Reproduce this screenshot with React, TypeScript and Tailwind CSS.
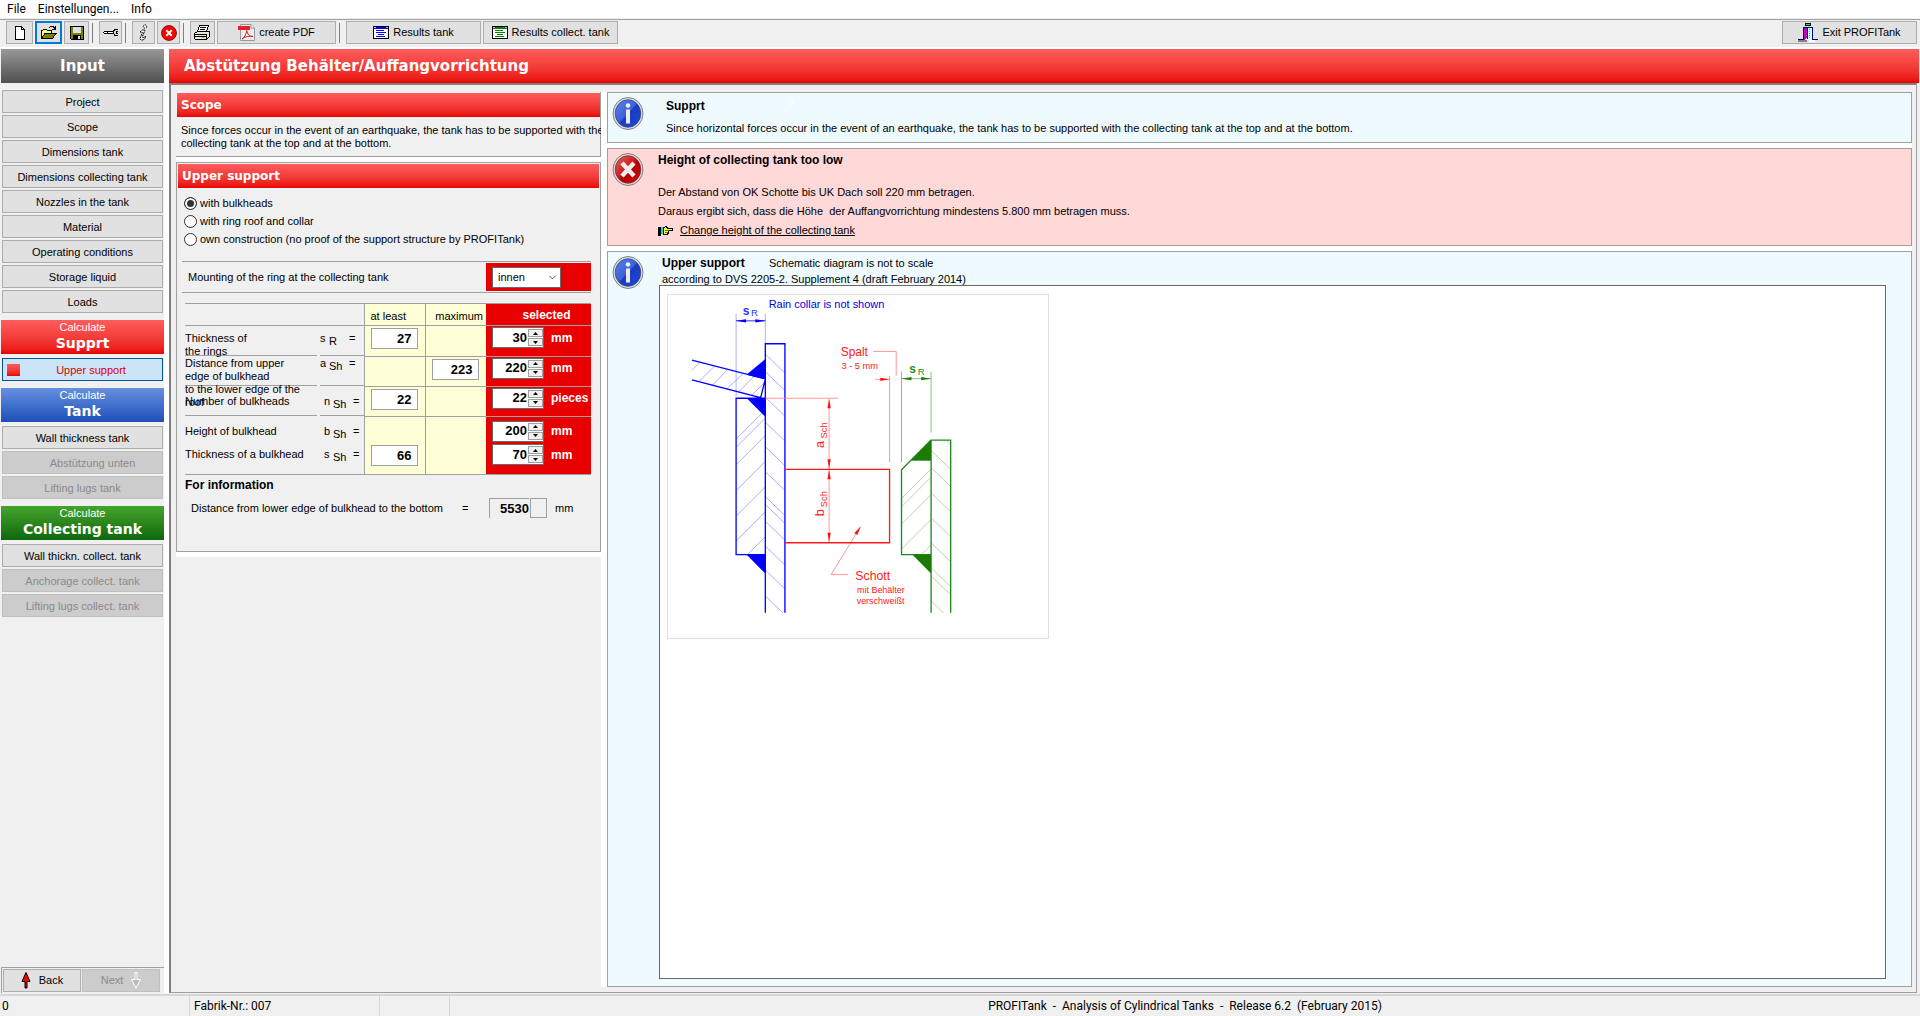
import { useState } from "react";
import type { ReactNode } from "react";
import { ChevronDown } from "lucide-react";

const inputPages = [
  "Project",
  "Scope",
  "Dimensions tank",
  "Dimensions collecting tank",
  "Nozzles in the tank",
  "Material",
  "Operating conditions",
  "Storage liquid",
  "Loads",
];

const supportTypes = [
  "with bulkheads",
  "with ring roof and collar",
  "own construction (no proof of the support structure by PROFITank)",
];

function NewIcon() {
  return (
    <svg width="12" height="14" viewBox="0 0 12 14" shapeRendering="crispEdges">
      <path d="M1.500 0.500H7.500L10.500 3.500V13.500H1.500Z" fill="#fff" stroke="#000" />
      <path d="M7.500 1V3.500H10.500" fill="none" stroke="#000" />
    </svg>
  );
}

function OpenIcon() {
  return (
    <svg width="17" height="15" viewBox="0 0 17 15" shapeRendering="crispEdges">
      <path d="M1.500 13V5.500H2.500L3.500 4.500H6.500L7.500 5.500H11.500V8" fill="#ffff80" stroke="#000" />
      <path d="M1.500 13.500L5 8.500H16L12.500 13.500Z" fill="#808000" stroke="#000" />
      <path d="M9.500 2.500L11 1.500H13L15.500 4M15.500 1V4.500H12" fill="none" stroke="#000" />
    </svg>
  );
}

function SaveIcon() {
  return (
    <svg width="14" height="14" viewBox="0 0 14 14" shapeRendering="crispEdges">
      <path d="M0.500 0.500H13.500V13.500H1.500L0.500 12.500Z" fill="#808000" stroke="#000" />
      <path d="M3 1H11V7H3Z" fill="#e0e0e0" />
      <path d="M3 9H11V13H3Z" fill="#000" />
      <path d="M8 10H10V13H8Z" fill="#e0e0e0" />
    </svg>
  );
}

function WrenchIcon() {
  return (
    <svg width="16" height="7" viewBox="0 0 16 7" shapeRendering="crispEdges">
      <path d="M1 2H10V5H1L0 4V3Z" fill="#000" />
      <path d="M1 3H4V4H1ZM5 3H11V4H5Z" fill="#fff" />
      <path d="M15 0.500H12L10.500 2V4.500L12 6.500H15M15 2.500H13.500V4.500H15" fill="none" stroke="#000" />
      <path d="M11 2H13V5H11Z" fill="#a0e8f0" />
    </svg>
  );
}

function ItalicInfoIcon() {
  return (
    <svg width="9" height="17" viewBox="0 0 9 17">
      <circle cx="6" cy="2.500" r="1.700" fill="#fff" stroke="#000" strokeDasharray="1.500 0.800" />
      <path
        d="M1 8L3.500 6H6L3.500 12.500L4 14L6.500 12.500V14L4 16H2L1 14.500L3.500 8.500Z"
        fill="#fff"
        stroke="#000"
        strokeDasharray="2 0.600"
      />
    </svg>
  );
}

function CancelIcon() {
  return (
    <svg width="16" height="16" viewBox="0 0 16 16">
      <circle cx="8" cy="8" r="7.500" fill="#f00" stroke="#400" strokeWidth="0.700" />
      <path d="M5.300 5.300L10.700 10.700M10.700 5.300L5.300 10.700" stroke="#fff" strokeWidth="2" />
    </svg>
  );
}

function PrintIcon() {
  return (
    <svg width="17" height="16" viewBox="0 0 17 16" shapeRendering="crispEdges">
      <path d="M5.500 0.500H14.500L12.500 6.500H3.500Z" fill="#fff" stroke="#000" />
      <path d="M6 2.500H12M5.500 4.500H11" stroke="#000" />
      <path d="M0.500 8.500L3.500 6.500H15.500V11.500L12.500 14.500H1.500L0.500 13.500Z" fill="#e8e8e8" stroke="#000" />
      <path d="M1 9.500H12.500V14M1 11.500H12" fill="none" stroke="#000" />
      <path d="M8 12H11V13H8Z" fill="#c8c800" />
    </svg>
  );
}

function PdfIcon() {
  return (
    <svg width="17" height="17" viewBox="0 0 17 17">
      <path d="M2.500 0.500H13L16.500 4V16.500H2.500Z" fill="#ececec" stroke="#9a9a9a" />
      <path d="M13 0.500V4H16.500" fill="#fff" stroke="#888" />
      <path d="M0 2H12V6H0Z" fill="#e4202c" />
      <path d="M4 15C6 14 8.500 10 8.800 6.500C9.500 10.500 12 13 15 12.500C12 11.500 7 12.500 4 15Z" fill="none" stroke="#d8202c" />
    </svg>
  );
}

function ResultIcon({ color }: { color: string }) {
  return (
    <svg width="16" height="13" viewBox="0 0 16 13" shapeRendering="crispEdges">
      <path d="M0.500 0.500H15.500V12.500H0.500Z" fill="#fff" stroke="#000" />
      <path d="M1 1H15V3H1Z" fill={color} />
      <path d="M1 1H3V2H1ZM13 1H15V2H13Z" fill="#c0c0c0" />
      <path d="M3 4.500H11M3 6.500H13M5 8.500H11M3 10.500H12" stroke={color} />
    </svg>
  );
}

function ExitIcon() {
  return (
    <svg width="20" height="20" viewBox="0 0 20 20" shapeRendering="crispEdges">
      <path d="M7 0H13V3H7Z" fill="#000" />
      <path d="M8 1H12V2H8Z" fill="#0f0" />
      <path d="M6 5H9V15L6 17Z" fill="#c000c0" />
      <path d="M10 5H14V17H10Z" fill="#c8ffff" />
      <path d="M11.500 6V16" stroke="#00c8e8" strokeDasharray="1 1" />
      <path d="M9.500 5V16" stroke="#000" />
      <path d="M0 17H9V19H0Z" fill="#808080" />
      <path d="M11 17H17V19H11Z" fill="#fff" />
      <path d="M0 16.500H5.500V4.500H14.500V16.500H20" fill="none" stroke="#000080" />
    </svg>
  );
}

function HandIcon() {
  return (
    <svg width="16" height="10" viewBox="0 0 16 10" shapeRendering="crispEdges">
      <path d="M0 1H3V10H0Z" fill="#000" />
      <path d="M3 1H5V8H3Z" fill="#00e0e0" />
      <path d="M5.500 1.500L8.500 0.500L9.500 2.500H14.500V4.500H10.500V7.500L8.500 8.500H5.500Z" fill="#ffff40" stroke="#000" />
      <path d="M7 4.500H11M7 6.500H10" stroke="#806000" />
    </svg>
  );
}

function InfoBadge() {
  return (
    <svg width="32" height="33" viewBox="0 0 31 33" className="shrink-0">
      <defs>
        <linearGradient id="infoBlue" x1="0" y1="0" x2="1" y2="1">
          <stop offset="0" stopColor="#5b82ea" />
          <stop offset="0.480" stopColor="#3a62d8" />
          <stop offset="0.520" stopColor="#1a3cc0" />
          <stop offset="1" stopColor="#1f48d8" />
        </linearGradient>
      </defs>
      <ellipse cx="15.500" cy="16.500" rx="15" ry="16" fill="#d9dde2" stroke="#7c8288" />
      <ellipse cx="15.500" cy="16.500" rx="12.800" ry="13.800" fill="url(#infoBlue)" stroke="#2a3d78" strokeWidth="0.700" />
      <circle cx="15.500" cy="8.500" r="2.300" fill="#f0f0f0" />
      <path d="M13.500 12.500H17.500V26.500H13.500Z" fill="#ececec" />
    </svg>
  );
}

function ErrorBadge() {
  return (
    <svg width="32" height="33" viewBox="0 0 31 33" className="shrink-0">
      <defs>
        <linearGradient id="errorRed" x1="0" y1="0" x2="1" y2="1">
          <stop offset="0" stopColor="#e06060" />
          <stop offset="0.450" stopColor="#cc2020" />
          <stop offset="0.550" stopColor="#b00000" />
          <stop offset="1" stopColor="#d80808" />
        </linearGradient>
      </defs>
      <ellipse cx="15.500" cy="16.500" rx="15" ry="16" fill="#dcd8d8" stroke="#857c7c" />
      <ellipse cx="15.500" cy="16.500" rx="12.800" ry="13.800" fill="url(#errorRed)" stroke="#802020" strokeWidth="0.700" />
      <path d="M9.500 10L21.500 23M21.500 10L9.500 23" stroke="#ececec" strokeWidth="4.500" />
    </svg>
  );
}

function ArrowIcon({ up }: { up?: boolean }) {
  return (
    <svg width="10" height="17" viewBox="0 0 10 17">
      {up ? (
        <path d="M5 0.500L9 9.500H6V16H4V9.500H1Z" fill="#f00" stroke="#000" />
      ) : (
        <path d="M4 0.500H6V7.500H9.500L5 16L0.500 7.500H4Z" fill="#bbb" stroke="#fff" />
      )}
    </svg>
  );
}

// group of toolbar buttons that starts with a divider line
function ToolGroup({ children }: { children: ReactNode }) {
  return (
    <div className="flex items-center gap-[6px] pl-px">
      <span className="h-5 w-px bg-[#808080]" />
      {children}
    </div>
  );
}

function ToolButton({ label, active, width, children }: { label: string; active?: boolean; width: string; children: ReactNode }) {
  return (
    <button
      aria-label={label}
      className={`flex h-[23px] items-center justify-center bg-[#e1e1e1] ${width} ${
        active ? "border-2 border-[#0078d7]" : "border border-[#adadad]"
      }`}
    >
      {children}
    </button>
  );
}

function TextButton({ label, width, children }: { label: string; width: string; children: ReactNode }) {
  return (
    <button className={`flex h-[23px] items-center justify-center gap-1 border border-[#adadad] bg-[#e1e1e1] whitespace-nowrap ${width}`}>
      {children}
      {label}
    </button>
  );
}

function NavButton({ label, disabled, indent }: { label: string; disabled?: boolean; indent?: boolean }) {
  return (
    <button
      disabled={disabled}
      className={`h-[23px] w-full border border-[#adadad] bg-[#e1e1e1] pt-px text-center disabled:border-[#bfbfbf] disabled:bg-[#cccccc] disabled:text-[#8a8a8a] ${
        indent ? "pl-5" : ""
      }`}
    >
      {label}
    </button>
  );
}

function NavHeader({ title, color }: { title: string; color: string }) {
  return (
    <div className={`flex h-[34px] flex-col items-center bg-linear-to-b text-white ${color}`}>
      <span className="leading-[15px]">Calculate</span>
      <h2 className="font-['DejaVu_Sans',sans-serif] text-sm leading-4 font-bold">{title}</h2>
    </div>
  );
}

function Sidebar() {
  return (
    <nav className="flex w-[163px] shrink-0 flex-col">
      <h2 className="flex h-[34px] items-center justify-center bg-linear-to-b from-[#999999] to-[#505050] pt-px font-['DejaVu_Sans',sans-serif] text-[15px] font-bold text-white">
        Input
      </h2>
      <div className="flex flex-col gap-[2px] px-px py-[7px]">
        {inputPages.map((page) => (
          <NavButton key={page} label={page} />
        ))}
      </div>
      <NavHeader title="Supprt" color="from-[#ff5c5c] to-[#e80000]" />
      <div className="px-px pt-1 pb-[7px]">
        <button className="flex h-[23px] w-full items-center border border-[#005499] bg-[#cce4f7] px-1 pt-px text-[#d80000]">
          <span className="h-3 w-[13px] bg-linear-to-b from-[#ff5c5c] to-[#e80000]" />
          <span className="flex-1 pl-1">Upper support</span>
        </button>
      </div>
      <NavHeader title="Tank" color="from-[#6690e0] to-[#1c50b8]" />
      <div className="flex flex-col gap-[2px] px-px pt-1 pb-[7px]">
        <NavButton label="Wall thickness tank" />
        <NavButton label="Abstützung unten" disabled indent />
        <NavButton label="Lifting lugs tank" disabled />
      </div>
      <NavHeader title="Collecting tank" color="from-[#44a42c] to-[#0c680c]" />
      <div className="flex flex-col gap-[2px] px-px pt-1">
        <NavButton label="Wall thickn. collect. tank" />
        <NavButton label="Anchorage collect. tank" disabled />
        <NavButton label="Lifting lugs collect. tank" disabled />
      </div>
      <div className="mt-auto flex gap-px border-t border-l border-[#a0a0a0] p-px">
        <button className="flex h-[23px] w-[78px] items-center justify-center gap-2 border border-[#adadad] bg-[#e1e1e1]">
          <ArrowIcon up />
          Back
        </button>
        <button disabled className="flex h-[23px] w-[78px] items-center justify-center gap-2 border border-[#bfbfbf] bg-[#cccccc] text-[#8a8a8a]">
          Next
          <ArrowIcon />
        </button>
      </div>
    </nav>
  );
}

function Bar({ children }: { children: ReactNode }) {
  return (
    <h2 className="flex h-6 items-center bg-linear-to-b from-[#ff5c5c] to-[#e80000] px-1 font-['DejaVu_Sans',sans-serif] text-xs font-bold text-white">
      {children}
    </h2>
  );
}

function Limit({ value, label }: { value?: string; label: string }) {
  if (!value) return null;
  return (
    <input
      aria-label={label}
      readOnly
      value={value}
      className="ml-[6px] block h-[21px] w-[47px] border border-[#a0a0a0] bg-white pr-[5px] text-right text-[13px] font-bold"
    />
  );
}

function Spin({ initial, label }: { initial: number; label: string }) {
  const [value, setValue] = useState(initial);
  return (
    <div className="flex h-[21px] w-[52px] shrink-0 border border-[#696969] bg-white">
      <input
        aria-label={label}
        value={value}
        onChange={(e) => setValue(Number(e.target.value) || 0)}
        className="w-[34px] text-right text-[13px] font-bold text-black outline-none"
      />
      <div className="flex w-4 flex-col gap-px py-px pl-px">
        <button aria-label={`${label} up`} onClick={() => setValue(value + 1)} className="flex h-2 items-center justify-center border border-[#a0a0a0] bg-[#f0f0f0]">
          <svg width="5" height="3" viewBox="0 0 5 3">
            <path d="M0 3L2.500 0L5 3Z" />
          </svg>
        </button>
        <button aria-label={`${label} down`} onClick={() => setValue(value - 1)} className="flex h-2 items-center justify-center border border-[#a0a0a0] bg-[#f0f0f0]">
          <svg width="5" height="3" viewBox="0 0 5 3">
            <path d="M0 0L2.500 3L5 0Z" />
          </svg>
        </button>
      </div>
    </div>
  );
}

type Row = {
  lines: string[];
  symbol: string;
  index: string;
  min?: string;
  max?: string;
  value: number;
  unit: string;
  label: string;
  field: string;
  border: string;
  shift?: boolean;
};

const rows: Row[] = [
  {
    lines: ["Thickness of", "the rings"],
    symbol: "s",
    index: "R",
    min: "27",
    value: 30,
    unit: "mm",
    label: "h-[30px] pt-[6px]",
    field: "pt-px",
    border: "border-b",
  },
  {
    lines: ["Distance from upper", "edge of bulkhead", "to the lower edge of the", "roof"],
    symbol: "a",
    index: "Sh",
    max: "223",
    value: 220,
    unit: "mm",
    label: "h-[30px] pt-px",
    field: "pt-px",
    border: "border-b",
  },
  {
    lines: ["Number of bulkheads"],
    symbol: "n",
    index: "Sh",
    min: "22",
    value: 22,
    unit: "pieces",
    label: "h-[30px] pt-[9px]",
    field: "pt-px",
    border: "border-b",
    shift: true,
  },
  {
    lines: ["Height of bulkhead"],
    symbol: "b",
    index: "Sh",
    value: 200,
    unit: "mm",
    label: "h-[27px] pt-[9px]",
    field: "pt-1",
    border: "",
    shift: true,
  },
  {
    lines: ["Thickness of a bulkhead"],
    symbol: "s",
    index: "Sh",
    min: "66",
    value: 70,
    unit: "mm",
    label: "h-[31px] pt-[5px]",
    field: "pt-px",
    border: "",
    shift: true,
  },
];

function DimensionTable() {
  return (
    <table className="mt-[10px] ml-[7px] w-[406px] table-fixed border-y border-[#a0a0a0] text-left">
      <colgroup>
        <col className="w-[135px]" />
        <col className="w-11" />
        <col className="w-[61px]" />
        <col className="w-[61px]" />
        <col className="w-[105px]" />
      </colgroup>
      <thead>
        <tr className="h-[22px] border-b border-[#a0a0a0]">
          <td colSpan={2} />
          <th className="border-l border-[#a0a0a0] bg-[#ffffd7] pt-1 pl-[6px] font-normal">at least</th>
          <th className="border-l border-[#a0a0a0] bg-[#ffffd7] pt-1 pr-[3px] text-right font-normal">maximum</th>
          <th className="bg-[#e80000] p-0 pl-4 text-center text-xs font-bold text-white">selected</th>
        </tr>
      </thead>
      <tbody>
        {rows.map((row) => (
          <tr key={row.lines[0]} className="align-top">
            <th className="p-0 font-normal">
              <div className={`mr-[3px] border-[#a0a0a0] whitespace-nowrap ${row.label} ${row.border}`}>
                {row.lines.map((line) => (
                  <div key={line} className="leading-[13px]">
                    {line}
                  </div>
                ))}
              </div>
            </th>
            <td className="p-0">
              <div className={`flex border-[#a0a0a0] leading-[13px] ${row.label} ${row.border} ${row.shift ? "pl-1" : ""}`}>
                <span className="w-[9px]">{row.symbol}</span>
                <sub className="top-[3px] w-5 text-[11px] leading-[13px]">{row.index}</sub>
                <span>=</span>
              </div>
            </td>
            <td className={`border-l border-[#a0a0a0] bg-[#ffffd7] p-0 pt-[2px] ${row.border}`}>
              <Limit value={row.min} label={`${row.lines[0]} at least`} />
            </td>
            <td className={`border-l border-[#a0a0a0] bg-[#ffffd7] p-0 pt-[2px] ${row.border}`}>
              <Limit value={row.max} label={`${row.lines[0]} maximum`} />
            </td>
            <td className={`border-[#a0a0a0] bg-[#e80000] p-0 ${row.field} ${row.border}`}>
              <div className="flex items-center gap-[7px] pl-[6px] text-xs leading-4 font-bold text-white">
                <Spin initial={row.value} label={row.lines[0]} />
                {row.unit}
              </div>
            </td>
          </tr>
        ))}
      </tbody>
    </table>
  );
}

function SupportForm() {
  const [supportType, setSupportType] = useState(supportTypes[0]);

  return (
    <div className="flex w-[425px] shrink-0 flex-col gap-[5px] self-start bg-white pb-[5px]">
      <section className="h-[65px] border-r border-b border-[#a0a0a0] bg-[#f0f0f0] pt-px pl-px">
        <Bar>Scope</Bar>
        <p className="pt-[7px] pl-1 leading-[13px] whitespace-nowrap">
          Since forces occur in the event of an earthquake, the tank has to be supported with the
          <br />
          collecting tank at the top and at the bottom.
        </p>
      </section>
      <section className="h-[390px] border border-[#a0a0a0] bg-[#f0f0f0] p-px">
        <Bar>Upper support</Bar>
        <div className="flex flex-col pt-[6px] pl-[6px]">
          {supportTypes.map((type) => (
            <label key={type} className="flex h-[18px] items-center gap-[3px]">
              <input
                type="radio"
                name="supportType"
                checked={supportType === type}
                onChange={() => setSupportType(type)}
                className="h-[13px] w-[13px] appearance-none rounded-full border border-[#333333] bg-white checked:bg-[#333333] checked:shadow-[inset_0_0_0_2px_white]"
              />
              {type}
            </label>
          ))}
        </div>
        <div className="mt-[13px] ml-1 flex h-8 w-[409px] items-center justify-between border-y border-[#a0a0a0] pl-[6px]">
          <label htmlFor="mounting">Mounting of the ring at the collecting tank</label>
          <div className="flex h-7 w-[105px] items-center bg-[#e80000] pl-[6px]">
            <div className="relative">
              <select id="mounting" className="block h-[21px] w-[69px] appearance-none border border-[#696969] bg-white pl-[5px]">
                <option>innen</option>
                <option>außen</option>
              </select>
              <ChevronDown size={11} className="pointer-events-none absolute top-[5px] right-[3px] text-[#444444]" />
            </div>
          </div>
        </div>
        <DimensionTable />
        <h3 className="pt-[3px] pl-[7px] text-xs leading-[14px] font-bold">For information</h3>
        <div className="flex items-center pt-[6px] pl-[13px]">
          <label htmlFor="bottomDistance" className="w-[271px]">
            Distance from lower edge of bulkhead to the bottom
          </label>
          <span className="w-[27px]">=</span>
          <input
            id="bottomDistance"
            readOnly
            value="5530"
            className="h-5 w-10 border-t border-l border-[#a0a0a0] text-right text-[13px] font-bold"
          />
          <span className="ml-px h-5 w-[17px] border border-[#a0a0a0]" />
          <span className="pl-2">mm</span>
        </div>
      </section>
    </div>
  );
}

// y of every hatch line on the edge it starts from
const wallHatch = [122, 222, 275, 352, 427, 501, 576, 651, 675, 725, 800, 872, 950];
const plateHatch = [390, 415, 467, 545, 622, 697, 772, 847];
const outerWallHatch = [437, 512, 564, 640, 715, 790, 865, 890, 965];
const outerPlateHatch = [568, 593, 645, 720, 797, 872];

function SupportDiagram() {
  return (
    <svg viewBox="0 0 1144 1031" className="mt-2 ml-[7px] block h-[345px] w-[382px] border border-[#e0e0e0]">
      <defs>
        <clipPath id="tankWall">
          <path d="M345 191H404V1001H345Z" />
        </clipPath>
        <clipPath id="tankRing">
          <path d="M257 355H289L345 411V826H257Z" />
        </clipPath>
        <clipPath id="roofSheet">
          <path d="M124 240L343 297L331 353L124 300Z" />
        </clipPath>
        <clipPath id="outerWall">
          <path d="M844 481H903V1001H844Z" />
        </clipPath>
        <clipPath id="outerRing">
          <path d="M755 570L785 541H844V826H755Z" />
        </clipPath>
      </defs>
      <g transform="translate(-52 -45)">
        <g stroke="#9c9cff" strokeWidth="2.500">
          <g clipPath="url(#tankWall)">
            {wallHatch.map((y) => (
              <path key={y} d={`M345 ${y}l59 57`} />
            ))}
          </g>
          <g clipPath="url(#tankRing)">
            {plateHatch.map((y) => (
              <path key={y} d={`M345 ${y}l-88 88`} />
            ))}
          </g>
          <g clipPath="url(#roofSheet)">
            <path d="M120 275L160 235M145 305L205 245M182 320L235 265M220 335L290 270M255 345L320 280M300 350L345 305" />
          </g>
          <path d="M257 100V350M345 100V191" />
        </g>
        <g stroke="#0000ff" strokeWidth="4" fill="none">
          <path d="M345 1001V191H404V1001M345 355H257V826H345M124 240L345 297L331 353L124 300" />
          <path d="M257 122H345" strokeWidth="2.500" />
        </g>
        <path d="M345 237V298L288 284ZM289 355H345V411ZM289 826H345V883ZM257 122l30 -5v10ZM345 122l-30 -5v10Z" fill="#0000ff" />

        <g stroke="#ff8080" strokeWidth="2.500" fill="none">
          <path d="M345 355H565M537 355V790M719 288V548M670 214H739V287M676 298H719M631 742L543 886H594" />
        </g>
        <path d="M404 569H719V790H404" fill="none" stroke="#ff1818" strokeWidth="4" />
        <path d="M537 357l-5 28h10ZM537 567l-5 -28h10ZM537 571l-5 28h10ZM537 788l-5 -28h10ZM719 298l-28 -5v10ZM632 741l-19 20l9 6Z" fill="#ff1010" />

        <g stroke="#b4c890" strokeWidth="2.500">
          <g clipPath="url(#outerWall)">
            {outerWallHatch.map((y) => (
              <path key={y} d={`M844 ${y}l59 57`} />
            ))}
          </g>
          <g clipPath="url(#outerRing)">
            {outerPlateHatch.map((y) => (
              <path key={y} d={`M844 ${y}l-88 88`} />
            ))}
          </g>
        </g>
        <path d="M755 275V548M844 275V458M755 296H844" stroke="#70b070" strokeWidth="2.500" />
        <path d="M844 1001V481H903V1001M844 826H755V570L844 481M785 541H844" fill="none" stroke="#208820" strokeWidth="4" />
        <path d="M844 481V541H785ZM788 826H844V883ZM755 296l30 -5v10ZM844 296l-30 -5v10Z" fill="#1c7c00" />

        <text x="355" y="83" fontSize="33" fill="#0000e0">
          Rain collar is not shown
        </text>
        <g fill="#3030ff">
          <text x="277" y="103" fontSize="36" fontWeight="bold">s</text>
          <text x="302" y="108" fontSize="29">R</text>
        </g>
        <g fill="#209020">
          <text x="778" y="279" fontSize="36" fontWeight="bold">s</text>
          <text x="804" y="284" fontSize="29">R</text>
        </g>
        <g fill="#ff1818">
          <text x="572" y="228" fontSize="36">Spalt</text>
          <text x="574" y="267" fontSize="28">3 - 5 mm</text>
          <text x="616" y="902" fontSize="37">Schott</text>
          <text x="621" y="940" fontSize="27">mit Behälter</text>
          <text x="620" y="973" fontSize="27">verschweißt</text>
          <text transform="translate(522 505) rotate(-90)" fontSize="38">a</text>
          <text transform="translate(530 476) rotate(-90)" fontSize="28">Sch</text>
          <text transform="translate(522 710) rotate(-90)" fontSize="38">b</text>
          <text transform="translate(530 683) rotate(-90)" fontSize="28">Sch</text>
        </g>
      </g>
    </svg>
  );
}

function Notices() {
  return (
    <div className="flex flex-1 flex-col gap-[5px] bg-white pl-[6px]">
      <section className="flex h-[51px] border border-[#a0a0a0] bg-[#effaff] pt-1 pl-1">
        <InfoBadge />
        <div className="pl-[22px]">
          <div className="flex gap-[84px] pt-[2px] leading-[14px]">
            <h3 className="text-xs leading-[14px] font-bold">Supprt</h3>
            <span className="text-[9px] leading-2 text-white">3</span>
          </div>
          <p className="pt-2 leading-[14px]">
            Since horizontal forces occur in the event of an earthquake, the tank has to be supported with the collecting tank at the top and at the bottom.
          </p>
        </div>
      </section>
      <section className="flex h-[98px] border border-[#a0a0a0] bg-[#ffd8d8] pt-1 pl-1">
        <ErrorBadge />
        <div className="pl-[14px]">
          <h3 className="text-xs leading-[14px] font-bold">Height of collecting tank too low</h3>
          <p className="pt-4 leading-[19px]">Der Abstand von OK Schotte bis UK Dach soll 220 mm betragen.</p>
          <p className="leading-[19px] whitespace-pre">Daraus ergibt sich, dass die Höhe  der Auffangvorrichtung mindestens 5.800 mm betragen muss.</p>
          <div className="flex items-center gap-[6px] leading-[19px]">
            <HandIcon />
            <a href="#height" className="underline">
              Change height of the collecting tank
            </a>
          </div>
        </div>
      </section>
      <section className="flex flex-1 border border-[#a0a0a0] bg-[#effaff] pt-1 pb-[7px] pl-1">
        <InfoBadge />
        <div className="flex flex-1 flex-col pr-[25px] pl-[15px]">
          <div className="flex gap-6 pl-[3px] leading-[15px]">
            <h3 className="w-[83px] text-xs leading-[15px] font-bold whitespace-nowrap">Upper support</h3>
            <span>Schematic diagram is not to scale</span>
          </div>
          <p className="h-[14px] pl-[3px] leading-4">according to DVS 2205-2. Supplement 4 (draft February 2014)</p>
          <div className="flex-1 border border-[#696969] bg-white">
            <SupportDiagram />
          </div>
        </div>
      </section>
    </div>
  );
}

export default function App() {
  return (
    <div className="flex min-h-screen flex-col bg-[#f0f0f0] font-['Liberation_Sans',sans-serif] text-[11px] text-black">
      <header>
        <div className="flex h-[18px] gap-3 bg-white px-[7px] font-['Roboto',sans-serif] text-xs leading-[18px]">
          <button>File</button>
          <button>Einstellungen...</button>
          <button>Info</button>
        </div>
        <div className="mt-px flex h-[28px] items-start gap-[2px] border-t border-[#a0a0a0] pt-px pr-[3px] pl-[6px]">
          <ToolButton label="New" width="w-[27px]">
            <NewIcon />
          </ToolButton>
          <ToolButton label="Open" width="w-[27px]" active>
            <OpenIcon />
          </ToolButton>
          <ToolButton label="Save" width="w-[25px]">
            <SaveIcon />
          </ToolButton>
          <ToolGroup>
            <ToolButton label="Settings" width="w-[23px]">
              <WrenchIcon />
            </ToolButton>
          </ToolGroup>
          <ToolGroup>
            <ToolButton label="Info" width="w-[23px]">
              <ItalicInfoIcon />
            </ToolButton>
          </ToolGroup>
          <ToolButton label="Cancel" width="w-[23px]">
            <CancelIcon />
          </ToolButton>
          <ToolGroup>
            <ToolButton label="Print" width="w-[25px]">
              <PrintIcon />
            </ToolButton>
          </ToolGroup>
          <TextButton label="create PDF" width="w-[119px]">
            <PdfIcon />
          </TextButton>
          <ToolGroup>
            <TextButton label="Results tank" width="w-[135px]">
              <ResultIcon color="#0000ff" />
            </TextButton>
          </ToolGroup>
          <TextButton label="Results collect. tank" width="w-[135px]">
            <ResultIcon color="#008000" />
          </TextButton>
          <div className="ml-auto">
            <TextButton label="Exit PROFITank" width="w-[135px]">
              <ExitIcon />
            </TextButton>
          </div>
        </div>
      </header>

      <div className="flex flex-1 border-t-2 border-white pl-px">
        <Sidebar />
        <main className="flex flex-1 flex-col border-l-[5px] border-white pr-px">
          <h1 className="flex h-[34px] items-center bg-linear-to-b from-[#ff5c5c] to-[#e80000] pt-px pl-[15px] font-['DejaVu_Sans',sans-serif] text-[15px] font-bold text-white">
            Abstützung Behälter/Auffangvorrichtung
          </h1>
          <div className="mr-[2px] flex flex-1 border-t-2 border-r border-b border-l-2 border-t-[#808080] border-r-[#a0a0a0] border-b-[#a0a0a0] border-l-[#808080] pt-[7px] pr-1 pb-[5px] pl-[5px]">
            <SupportForm />
            <Notices />
          </div>
        </main>
      </div>

      <footer className="mt-px grid h-[22px] grid-cols-[190px_190px_70px_1fr] border-t-2 border-[#d7d7d7] font-['Roboto',sans-serif] text-xs leading-[21px]">
        <span className="border-r border-[#d7d7d7] pl-[2px]">0</span>
        <span className="border-r border-[#d7d7d7] pl-1">Fabrik-Nr.: 007</span>
        <span className="border-r border-[#d7d7d7]" />
        <span className="text-center whitespace-pre">PROFITank  -  Analysis of Cylindrical Tanks  -  Release 6.2  (February 2015)</span>
      </footer>
    </div>
  );
}
